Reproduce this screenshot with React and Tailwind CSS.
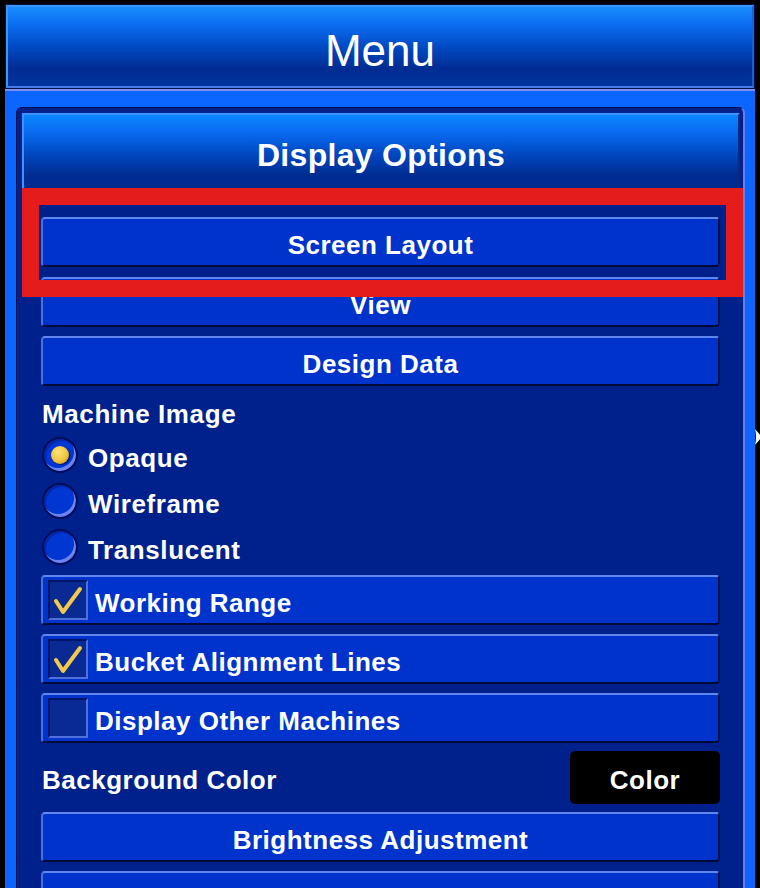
import React from "react";

const font = "font-['Liberation_Sans',Arial,sans-serif]";

function Btn({ children, className = "" }) {
  return (
    <div
      className={`h-[50px] rounded-[4px] bg-[#0033cc] border-t-[2px] border-t-[#6187ec] border-l-[2px] border-l-[#4a70de] border-r-[2px] border-r-[#001048] border-b-[2px] border-b-[#000a36] flex items-center justify-center pt-[6px] text-white text-[26px] font-bold tracking-[0.5px] ${className}`}
    >
      {children}
    </div>
  );
}

function Radio({ checked, label }) {
  return (
    <div className="h-[46px] flex items-center pl-[1px]">
      <div className="w-[36px] h-[36px] rounded-full border-[2px] border-[#000c58] bg-[#0036d2] shadow-[inset_-2px_-3px_0_#6c84f2,inset_2px_2px_0_#0028a8] flex items-center justify-center">
        {checked && (
          <div className="w-[18px] h-[18px] rounded-full bg-[radial-gradient(circle_at_40%_35%,#ffe27a_0%,#f2c43c_55%,#a8781a_100%)] shadow-[1px_1px_1px_#001060]" />
        )}
      </div>
      <span className="ml-[10px] pt-[6px] text-white text-[26px] font-bold tracking-[0.6px]">{label}</span>
    </div>
  );
}

function Check({ checked, label, className = "" }) {
  return (
    <div
      className={`h-[50px] rounded-[4px] bg-[#0033cc] border-t-[2px] border-t-[#6187ec] border-l-[2px] border-l-[#4a70de] border-r-[2px] border-r-[#001048] border-b-[2px] border-b-[#000a36] flex items-center pl-[5px] ${className}`}
    >
      <div className="w-[40px] h-[40px] bg-[#082a92] border-t-[2px] border-t-[#001468] border-l-[2px] border-l-[#001468] border-r-[2px] border-r-[#5070dc] border-b-[2px] border-b-[#5070dc] flex items-center justify-center">
        {checked && (
          <svg width="36" height="36" viewBox="0 0 36 36">
            <path d="M6 19 L13 30 L30 7" fill="none" stroke="#f4c84a" strokeWidth="4" strokeLinecap="round" strokeLinejoin="round" />
          </svg>
        )}
      </div>
      <span className="ml-[7px] pt-[6px] text-white text-[26px] font-bold tracking-[0.5px]">{label}</span>
    </div>
  );
}

export default function App() {
  return (
    <div className={`relative w-[760px] h-[888px] overflow-hidden bg-black flex flex-col ${font}`}>
      {/* Menu header */}
      <div className="mx-[5px] mt-[4px] h-[85px] border border-[#00124a] shrink-0">
        <div className="h-full border-[2px] border-t-[#3c94ff] border-l-[#3c94ff] border-r-[#1a60d0] border-b-[#4a7ae8] bg-[linear-gradient(to_bottom,#1a8cff_0%,#0a6ef0_22%,#004ac4_50%,#002c92_78%,#00349e_100%)] flex items-center justify-center pt-[8px]">
          <span className="text-white text-[44px] leading-none">Menu</span>
        </div>
      </div>

      {/* Blue frame */}
      <div className="mx-[5px] flex-1 border-t-[2px] border-t-[#7d8ef5] bg-[#0a66ff] pt-[16px] pl-[11px] pr-[10px] flex flex-col">
        <div className="flex-1 bg-[#00218c] rounded-tl-[6px] rounded-tr-[6px] border-l border-t border-[#000c4c] border-r-[2px] border-r-[#6b7be8] pt-[5px]">
          {/* Display Options header */}
          <div className="ml-[5px] mr-[3px] h-[77px] border-t-[2px] border-t-[#3c94ff] border-l-[2px] border-l-[#3c94ff] border-r-[2px] border-r-[#0a2a80] bg-[linear-gradient(to_bottom,#0a86ff_0%,#0a6cf2_22%,#004ac4_50%,#002c92_80%,#002a8c_100%)] flex items-center justify-center pt-[4px]">
            <span className="text-white text-[32px] font-bold tracking-[0.3px]">Display Options</span>
          </div>

          <div className="pl-[24px] pr-[23px] pt-[27px] flex flex-col">
            <Btn>Screen Layout</Btn>
            <Btn className="mt-[10px]">View</Btn>
            <Btn className="mt-[9px]">Design Data</Btn>

            <div className="mt-[13px] h-[30px] flex items-center pl-[1px] text-white text-[26px] font-bold tracking-[0.6px]">
              Machine Image
            </div>
            <div className="mt-[3px] flex flex-col">
              <Radio checked label="Opaque" />
              <Radio label="Wireframe" />
              <Radio label="Translucent" />
            </div>

            <Check className="mt-[5px]" checked label="Working Range" />
            <Check className="mt-[9px]" checked label="Bucket Alignment Lines" />
            <Check className="mt-[9px]" label="Display Other Machines" />

            <div className="mt-[8px] h-[53px] flex items-center justify-between">
              <span className="pl-[1px] pt-[6px] text-white text-[26px] font-bold tracking-[0.5px]">Background Color</span>
              <div className="w-[150px] h-[53px] rounded-[5px] bg-black flex items-center justify-center pt-[6px] text-white text-[26px] font-bold tracking-[0.5px]">
                Color
              </div>
            </div>

            <Btn className="mt-[8px]">Brightness Adjustment</Btn>
            <Btn className="mt-[9px]" />
          </div>
        </div>
      </div>

      {/* Red highlight overlay */}
      <div className="absolute left-[22px] top-[188px] w-[721px] h-[109px] border-[17px] border-[#e41c1c]" />

      {/* Small pointer at right edge */}
      <svg className="absolute left-[754px] top-[429px]" width="8" height="16" viewBox="0 0 8 16">
        <path d="M1 0 L8 8 L1 16 Q3 8 1 0 Z" fill="#ffffff" />
      </svg>
    </div>
  );
}
